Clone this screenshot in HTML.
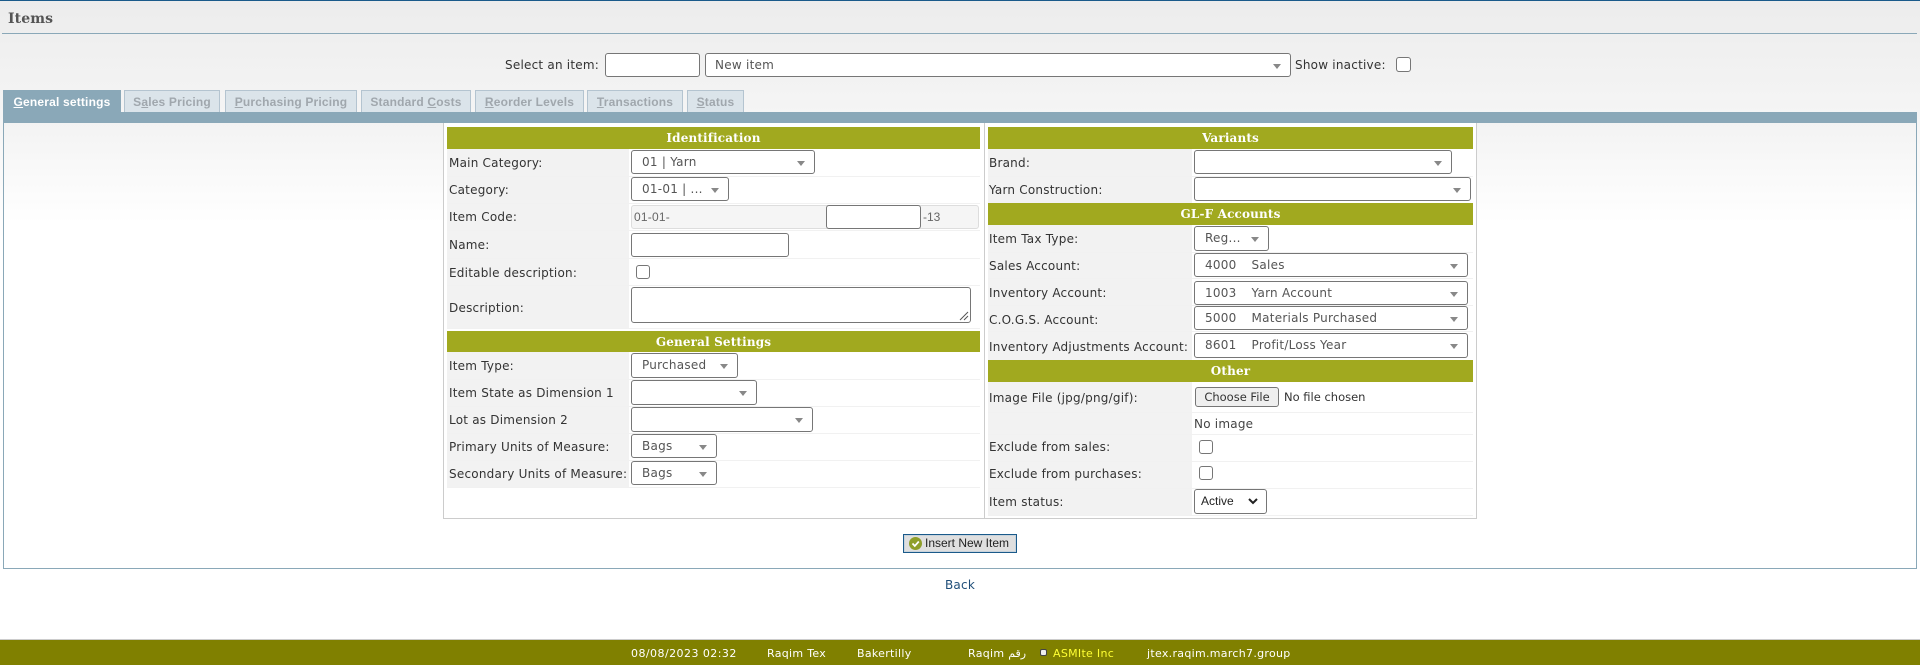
<!DOCTYPE html>
<html><head><meta charset="utf-8"><title>Items</title>
<style>
html,body{margin:0;padding:0;width:1920px;height:667px;overflow:hidden;background:#fff}
body{position:relative;font:12px/16px "DejaVu Sans",sans-serif;color:#333}
#bg{position:absolute;left:0;top:0;width:1920px;height:240px;background:linear-gradient(#ececec,#fff)}
div,span.a,u.a{position:absolute;box-sizing:border-box;white-space:nowrap}
.l{height:16px;line-height:16px;color:#333;letter-spacing:.22px}
.s{background:#fff;border:1px solid #767676;border-radius:3px;color:#555;line-height:22px;padding-left:10px;letter-spacing:.25px}
.s:after{content:"";position:absolute;right:9px;top:10px;border:4px solid transparent;border-top:5px solid #888;border-bottom:0}
.i{background:#fff;border:1px solid #767676;border-radius:3px}
.c{width:14px;height:14px;background:#fff;border:1px solid #767676;border-radius:3px}
.h{height:22px;background:#a1a91f;color:#fff;text-align:center;font:bold 12px/23px "DejaVu Serif",serif;letter-spacing:.15px}
.t{height:22px;top:90px;background:#dbe4ea;border:1px solid #b4c4d0;border-bottom:0;color:#a0a7ad;font:bold 12px/23px "Liberation Sans",sans-serif;text-align:center;letter-spacing:.18px}
.cell{background:#f2f2f2}
.r{height:1px;background:#f1f1f1}
.f{top:646px;height:16px;line-height:16px;color:#fff;font-size:11px;letter-spacing:.3px}
</style></head><body>
<div id="bg"></div>
<div style="left:0;top:0;width:1920px;height:1px;background:#1a5a8a"></div>
<div style="left:8px;top:10px;font:bold 14px/19px 'DejaVu Serif',serif;color:#555;letter-spacing:.1px">Items</div>
<div style="left:2px;top:33px;width:1915px;height:1px;background:#8aa8b8"></div>

<div class="l" style="left:505px;top:57px">Select an item:</div>
<div class="i" style="left:605px;top:53px;width:95px;height:24px"></div>
<div class="s" style="left:705px;top:53px;width:586px;height:24px;padding-left:9px">New item</div>
<div class="l" style="left:1295px;top:57px">Show inactive:</div>
<div class="c" style="left:1396px;top:57px;width:15px;height:15px"></div>

<div class="t" style="left:3px;width:118px;background:#8aa8b8;border-color:#8aa8b8;color:#fff"><u>G</u>eneral settings</div>
<div class="t" style="left:124px;width:96px">S<u>a</u>les Pricing</div>
<div class="t" style="left:225px;width:132px"><u>P</u>urchasing Pricing</div>
<div class="t" style="left:361px;width:110px">Standard <u>C</u>osts</div>
<div class="t" style="left:475px;width:109px"><u>R</u>eorder Levels</div>
<div class="t" style="left:587px;width:96px"><u>T</u>ransactions</div>
<div class="t" style="left:687px;width:57px"><u>S</u>tatus</div>

<div style="left:3px;top:112px;width:1914px;height:457px;border:1px solid #8aa8b8;border-top:0;background:linear-gradient(#f3f3f3,#fff 100px) 0 11px no-repeat"></div>
<div style="left:3px;top:112px;width:1914px;height:11px;background:#8aa8b8"></div>
<div style="left:443px;top:123px;width:1034px;height:396px;border:1px solid #ccc;border-top:0;background:#fff"></div>
<div style="left:984px;top:123px;width:1px;height:395px;background:#ccc"></div>

<!-- label cells -->
<div class="cell" style="left:447px;top:149px;width:182px;height:179px"></div>
<div class="cell" style="left:447px;top:352px;width:182px;height:135px"></div>
<div class="cell" style="left:988px;top:149px;width:204px;height:54px"></div>
<div class="cell" style="left:988px;top:225px;width:204px;height:135px"></div>
<div class="cell" style="left:988px;top:382px;width:204px;height:133px"></div>
<div style="left:631px;top:205px;width:348px;height:24px;background:#f5f5f5;border:1px solid #ddd;border-radius:3px"></div>

<!-- row separators -->
<div class="r" style="left:447px;top:176px;width:533px"></div>
<div class="r" style="left:447px;top:203px;width:533px"></div>
<div class="r" style="left:447px;top:230px;width:533px"></div>
<div class="r" style="left:447px;top:258px;width:533px"></div>
<div class="r" style="left:447px;top:285px;width:533px"></div>
<div class="r" style="left:447px;top:328px;width:533px"></div>
<div class="r" style="left:447px;top:379px;width:533px"></div>
<div class="r" style="left:447px;top:406px;width:533px"></div>
<div class="r" style="left:447px;top:433px;width:533px"></div>
<div class="r" style="left:447px;top:460px;width:533px"></div>
<div class="r" style="left:447px;top:487px;width:533px"></div>
<div class="r" style="left:988px;top:176px;width:485px"></div>
<div class="r" style="left:988px;top:252px;width:485px"></div>
<div class="r" style="left:988px;top:278px;width:485px"></div>
<div class="r" style="left:988px;top:305px;width:485px"></div>
<div class="r" style="left:988px;top:331px;width:485px"></div>
<div class="r" style="left:988px;top:412px;width:485px"></div>
<div class="r" style="left:988px;top:434px;width:485px"></div>
<div class="r" style="left:988px;top:461px;width:485px"></div>
<div class="r" style="left:988px;top:488px;width:485px"></div>
<div class="r" style="left:988px;top:515px;width:485px"></div>

<!-- headers -->
<div class="h" style="left:447px;top:127px;width:533px">Identification</div>
<div class="h" style="left:447px;top:331px;width:533px;height:21px;line-height:22px">General Settings</div>
<div class="h" style="left:988px;top:127px;width:485px">Variants</div>
<div class="h" style="left:988px;top:203px;width:485px">GL-F Accounts</div>
<div class="h" style="left:988px;top:360px;width:485px">Other</div>

<!-- left labels -->
<div class="l" style="left:449px;top:155px">Main Category:</div>
<div class="l" style="left:449px;top:182px">Category:</div>
<div class="l" style="left:449px;top:209px">Item Code:</div>
<div class="l" style="left:449px;top:237px">Name:</div>
<div class="l" style="left:449px;top:265px">Editable description:</div>
<div class="l" style="left:449px;top:300px">Description:</div>
<div class="l" style="left:449px;top:358px">Item Type:</div>
<div class="l" style="left:449px;top:385px">Item State as Dimension 1</div>
<div class="l" style="left:449px;top:412px">Lot as Dimension 2</div>
<div class="l" style="left:449px;top:439px">Primary Units of Measure:</div>
<div class="l" style="left:449px;top:466px">Secondary Units of Measure:</div>

<!-- left controls -->
<div class="s" style="left:631px;top:150px;width:184px;height:24px">01 | Yarn</div>
<div class="s" style="left:631px;top:177px;width:98px;height:24px">01-01 | ...</div>
<div style="left:634px;top:209px;font:12px/16px 'Liberation Sans',sans-serif;color:#666;letter-spacing:.2px">01-01-</div>
<div class="i" style="left:826px;top:205px;width:95px;height:24px"></div>
<div style="left:923px;top:209px;font:12px/16px 'Liberation Sans',sans-serif;color:#666">-13</div>
<div class="i" style="left:631px;top:233px;width:158px;height:24px"></div>
<div class="c" style="left:636px;top:265px"></div>
<div class="i" style="left:631px;top:287px;width:340px;height:36px"><svg style="position:absolute;right:1px;bottom:1px" width="10" height="10"><path d="M1 9L9 1M5 9L9 5" stroke="#555" fill="none"/></svg></div>
<div class="s" style="left:631px;top:353px;width:107px;height:25px">Purchased</div>
<div class="s" style="left:631px;top:380px;width:126px;height:25px"></div>
<div class="s" style="left:631px;top:407px;width:182px;height:25px"></div>
<div class="s" style="left:631px;top:434px;width:86px;height:24px">Bags</div>
<div class="s" style="left:631px;top:461px;width:86px;height:24px">Bags</div>

<!-- right labels -->
<div class="l" style="left:989px;top:155px">Brand:</div>
<div class="l" style="left:989px;top:182px">Yarn Construction:</div>
<div class="l" style="left:989px;top:231px">Item Tax Type:</div>
<div class="l" style="left:989px;top:258px">Sales Account:</div>
<div class="l" style="left:989px;top:285px">Inventory Account:</div>
<div class="l" style="left:989px;top:312px">C.O.G.S. Account:</div>
<div class="l" style="left:989px;top:339px">Inventory Adjustments Account:</div>
<div class="l" style="left:989px;top:390px">Image File (jpg/png/gif):</div>
<div class="l" style="left:989px;top:439px">Exclude from sales:</div>
<div class="l" style="left:989px;top:466px">Exclude from purchases:</div>
<div class="l" style="left:989px;top:494px">Item status:</div>

<!-- right controls -->
<div class="s" style="left:1194px;top:150px;width:258px;height:24px"></div>
<div class="s" style="left:1194px;top:177px;width:277px;height:24px"></div>
<div class="s" style="left:1194px;top:226px;width:75px;height:25px">Reg...</div>
<div class="s" style="left:1194px;top:253px;width:274px;height:24px">4000<span style="margin-left:15px">Sales</span></div>
<div class="s" style="left:1194px;top:281px;width:274px;height:24px">1003<span style="margin-left:15px">Yarn Account</span></div>
<div class="s" style="left:1194px;top:306px;width:274px;height:24px">5000<span style="margin-left:15px">Materials Purchased</span></div>
<div class="s" style="left:1194px;top:333px;width:274px;height:25px">8601<span style="margin-left:15px">Profit/Loss Year</span></div>
<div style="left:1195px;top:387px;width:84px;height:20px;background:#efefef;border:1px solid #767676;border-radius:3px;text-align:center;font:11.5px/18px 'DejaVu Sans',sans-serif;color:#333">Choose File</div>
<div style="left:1284px;top:389px;color:#333;font:11.5px/16px 'DejaVu Sans',sans-serif">No file chosen</div>
<div class="l" style="left:1194px;top:416px;color:#444">No image</div>
<div class="c" style="left:1199px;top:440px"></div>
<div class="c" style="left:1199px;top:466px"></div>
<div style="left:1194px;top:489px;width:73px;height:25px;background:#fff;border:1px solid #767676;border-radius:3px;font:12px/22px 'Liberation Sans',sans-serif;color:#222;padding-left:6px">Active<svg style="position:absolute;right:8px;top:8px" width="10" height="7"><path d="M1 1L5 5L9 1" stroke="#222" stroke-width="2" fill="none"/></svg></div>

<!-- button + back -->
<div style="left:903px;top:534px;width:114px;height:19px;background:#dfdfdf;border:1px solid #1a5a8a;box-shadow:inset 0 0 0 1px #c8d3dc;font:12px/17px 'Liberation Sans',sans-serif;color:#222;padding-left:21px">Insert New Item<svg style="position:absolute;left:5px;top:2px" width="13" height="13"><circle cx="6.5" cy="6.5" r="6.5" fill="#8f9f2a"/><path d="M3.5 6.5L5.8 9L9.8 4.5" stroke="#fff" stroke-width="1.7" fill="none"/></svg></div>
<div class="l" style="left:900px;width:120px;top:577px;text-align:center;color:#1f4e79">Back</div>

<!-- footer -->
<div style="left:0;top:639px;width:1920px;height:1px;background:#ccc"></div>
<div style="left:0;top:640px;width:1920px;height:25px;background:#808000"></div>
<div class="f" style="left:631px;letter-spacing:.45px">08/08/2023 02:32</div>
<div class="f" style="left:767px">Raqim Tex</div>
<div class="f" style="left:857px">Bakertilly</div>
<div class="f" style="left:968px">Raqim <span>رقم</span></div>
<div style="left:1040px;top:649px;width:7px;height:7px;background:#eee;border:1px solid #444;border-radius:2px"></div>
<div class="f" style="left:1053px;color:#ffff33">ASMIte Inc</div>
<div class="f" style="left:1147px">jtex.raqim.march7.group</div>
</body></html>
